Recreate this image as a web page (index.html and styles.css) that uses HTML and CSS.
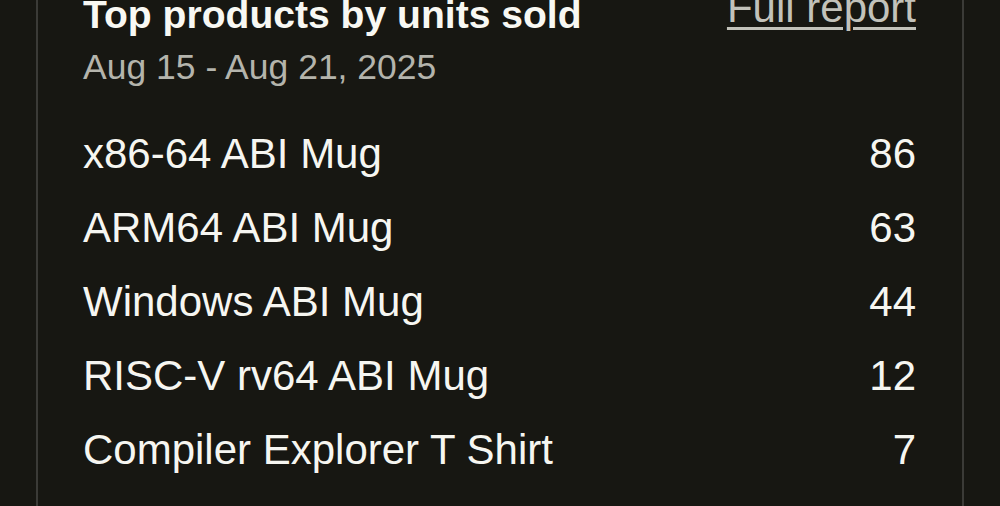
FILE: index.html
```html
<!DOCTYPE html>
<html lang="en">
<head>
<meta charset="utf-8">
<title>Top products by units sold</title>
<link rel="stylesheet" href="styles.css">
</head>
<body>
<section class="card">
  <header class="card-head">
    <div class="head-text">
      <h2 class="title">Top products by units sold</h2>
      <p class="range">Aug 15 - Aug 21, 2025</p>
    </div>
    <a class="report-link" href="#">Full report</a>
  </header>
  <ul class="products">
    <li class="product"><span class="name">x86-64 ABI Mug</span><span class="units">86</span></li>
    <li class="product"><span class="name">ARM64 ABI Mug</span><span class="units">63</span></li>
    <li class="product"><span class="name">Windows ABI Mug</span><span class="units">44</span></li>
    <li class="product"><span class="name">RISC-V rv64 ABI Mug</span><span class="units">12</span></li>
    <li class="product"><span class="name">Compiler Explorer T Shirt</span><span class="units">7</span></li>
  </ul>
</section>
</body>
</html>
```

FILE: styles.css
```css
html, body {
  margin: 0;
  padding: 0;
  background: #171712;
  height: 100%;
  overflow: hidden;
}

body {
  font-family: "Liberation Sans", Arial, sans-serif;
  color: #f6f6f1;
}

.card {
  margin: -13px 36px 0 36px;
  border-left: 2px solid #3b3b37;
  border-right: 2px solid #3b3b37;
  padding: 0 46px 0 45px;
  min-height: 600px;
}

.card-head {
  display: flex;
  justify-content: space-between;
  align-items: flex-start;
}

.title {
  margin: 0;
  font-size: 39.1px;
  font-weight: 700;
  line-height: 55px;
  color: #f8f8f3;
}

.range {
  margin: 0;
  font-size: 35.5px;
  line-height: 50px;
  color: #b4b4ac;
}

.report-link {
  font-size: 42px;
  line-height: 41px;
  color: #c2c2ba;
  text-decoration: underline;
  text-decoration-thickness: 3px;
  text-underline-offset: 5px;
}

.products {
  list-style: none;
  margin: 25px 0 0 0;
  padding: 0;
}

.product {
  display: flex;
  justify-content: space-between;
  align-items: baseline;
  padding: 12px 0;
  font-size: 42px;
  line-height: 50px;
}

.units {
  text-align: right;
}
```
